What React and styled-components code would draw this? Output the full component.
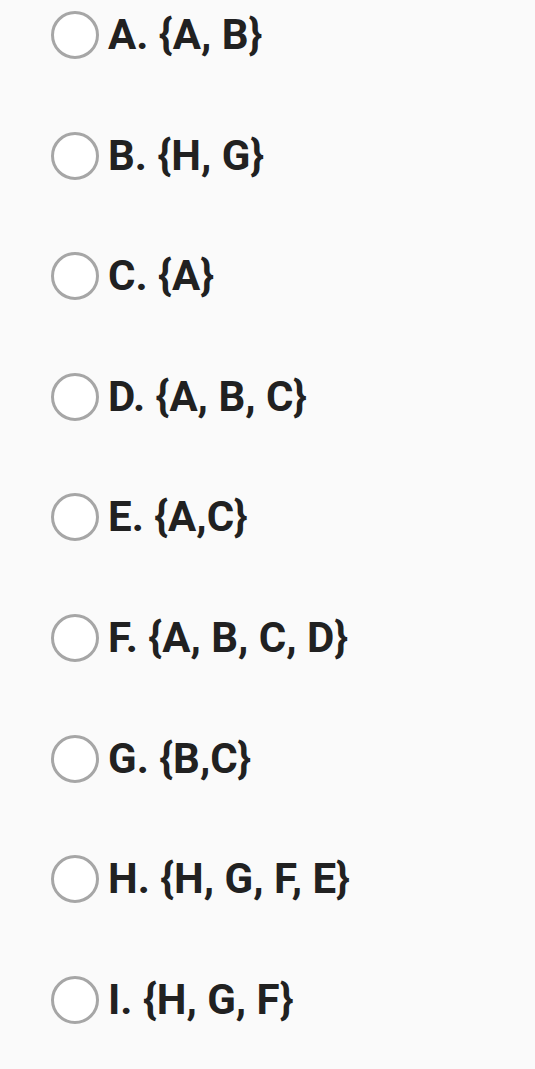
import React from 'react';
import styled, { createGlobalStyle } from 'styled-components';

const GlobalStyle = createGlobalStyle`
  html, body {
    margin: 0;
    padding: 0;
    background: #fafafa;
    font-family: Roboto, "Liberation Sans", sans-serif;
  }
`;

const List = styled.div`
  display: flex;
  flex-direction: column;
  gap: 72.6px;
  padding: 11px 0 0 51px;
  min-height: 1069px;
  box-sizing: border-box;
`;

const Option = styled.label`
  display: flex;
  align-items: center;
  gap: 9px;
  height: 48px;
  cursor: pointer;
`;

const Radio = styled.span`
  width: 48px;
  height: 48px;
  box-sizing: border-box;
  border-radius: 50%;
  border: 3px solid #a6a6a6;
  background: #ffffff;
  flex-shrink: 0;
`;

const Text = styled.span`
  font-size: 42px;
  font-weight: 700;
  color: #212121;
  line-height: 48px;
`;

const options = [
  'A. {A, B}',
  'B. {H, G}',
  'C. {A}',
  'D. {A, B, C}',
  'E. {A,C}',
  'F. {A, B, C, D}',
  'G. {B,C}',
  'H. {H, G, F, E}',
  'I. {H, G, F}',
];

export default function App() {
  return (
    <>
      <GlobalStyle />
      <List>
        {options.map((o) => (
          <Option key={o}>
            <Radio />
            <Text>{o}</Text>
          </Option>
        ))}
      </List>
    </>
  );
}
